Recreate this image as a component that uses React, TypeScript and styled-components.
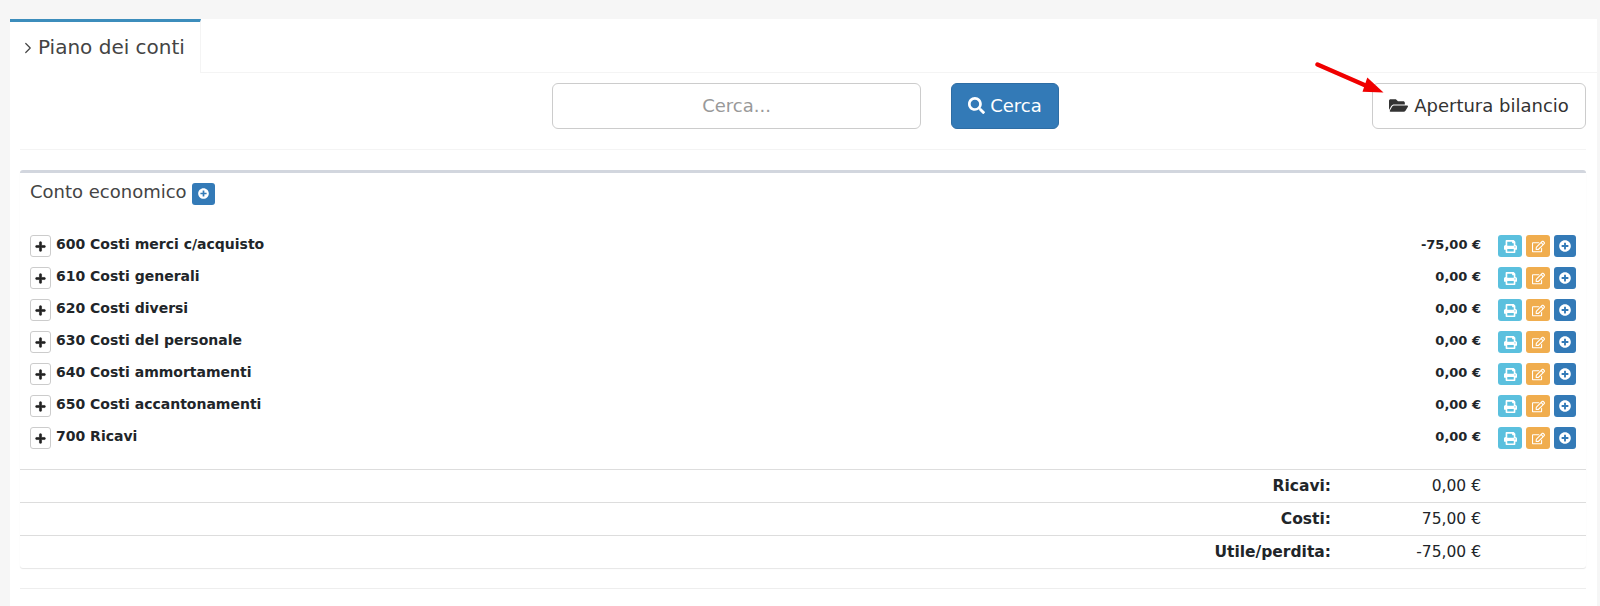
import styled, { createGlobalStyle } from "styled-components";
import {
  FaFolderOpen,
  FaPlus,
  FaPlusCircle,
  FaPrint,
  FaRegEdit,
  FaSearch,
} from "react-icons/fa";
import { ChevronRight } from "lucide-react";

const accounts = [
  { code: "600 Costi merci c/acquisto", amount: "-75,00 €" },
  { code: "610 Costi generali", amount: "0,00 €" },
  { code: "620 Costi diversi", amount: "0,00 €" },
  { code: "630 Costi del personale", amount: "0,00 €" },
  { code: "640 Costi ammortamenti", amount: "0,00 €" },
  { code: "650 Costi accantonamenti", amount: "0,00 €" },
  { code: "700 Ricavi", amount: "0,00 €" },
];

const totals = [
  { label: "Ricavi:", value: "0,00 €" },
  { label: "Costi:", value: "75,00 €" },
  { label: "Utile/perdita:", value: "-75,00 €" },
];

const App = () => {
  return (
    <>
      <GlobalStyle />
      <Page>
        <TabBar>
          <Tab>
            <ChevronRight strokeWidth={1.6} />
            Piano dei conti
          </Tab>
        </TabBar>
        <Content>
          <SearchRow>
            <SearchInput placeholder="Cerca..." />
            <SearchButton>
              <FaSearch />
              Cerca
            </SearchButton>
            <OpenButton>
              <FaFolderOpen />
              Apertura bilancio
            </OpenButton>
            {/* red arrow drawn on top of the screenshot */}
            <Arrow width="80" height="44" viewBox="0 0 80 44">
              <path d="M2.5 2.5 L54 25" stroke="#f00000" strokeWidth="4.4" strokeLinecap="round" />
              <path d="M68.5 30.5 L47.5 29.7 L52.3 15.5 Z" fill="#f00000" />
            </Arrow>
          </SearchRow>
          <Box>
            <BoxTitle>
              <span>Conto economico</span>
              <TitleButton>
                <FaPlusCircle />
              </TitleButton>
            </BoxTitle>
            <AccountList>
              {accounts.map((account) => (
                <AccountRow key={account.code}>
                  <ExpandButton>
                    <FaPlus />
                  </ExpandButton>
                  <AccountName>{account.code}</AccountName>
                  <AccountAmount>{account.amount}</AccountAmount>
                  <Actions>
                    <ActionButton $color="#5bc0de" $width={24} $icon={13}>
                      <FaPrint />
                    </ActionButton>
                    <ActionButton $color="#f0ad4e" $width={24} $icon={13}>
                      <FaRegEdit />
                    </ActionButton>
                    <ActionButton $color="#337ab7" $width={22} $icon={12}>
                      <FaPlusCircle />
                    </ActionButton>
                  </Actions>
                </AccountRow>
              ))}
            </AccountList>
            {totals.map((total) => (
              <TotalRow key={total.label}>
                <TotalLabel>{total.label}</TotalLabel>
                <TotalValue>{total.value}</TotalValue>
              </TotalRow>
            ))}
          </Box>
          <BottomRule />
        </Content>
      </Page>
    </>
  );
};

export default App;

const GlobalStyle = createGlobalStyle`
  html, body {
    margin: 0;
    height: 606px;
    overflow: hidden;
    background: #f6f6f6;
    font-family: "DejaVu Sans", sans-serif;
    color: #212529;
  }
`;

const Page = styled.div`
  margin: 19px 3px 0 10px;
  height: 587px;
  background: #fff;
`;

// tabs
const TabBar = styled.div`
  height: 53px;
  border-bottom: 1px solid #f4f4f4;
  box-sizing: content-box;
`;

const Tab = styled.div`
  width: 191px;
  height: 54px;
  box-sizing: border-box;
  border-top: 3px solid #3c8dbc;
  border-right: 1px solid #f4f4f4;
  background: #fff;
  display: flex;
  align-items: center;
  padding: 0 0 1px 9px;
  font-size: 20px;
  color: #444;
  svg {
    width: 18px;
    height: 18px;
    margin-right: 1px;
    margin-top: 2px;
  }
`;

const Content = styled.div`
  margin: 0 11px 0 10px;
`;

// search row
const SearchRow = styled.div`
  position: relative;
  display: flex;
  align-items: flex-start;
  height: 77px;
  padding-top: 10px;
  box-sizing: border-box;
  border-bottom: 1px solid #f4f4f4;
`;

const SearchInput = styled.input`
  width: 369px;
  height: 46px;
  margin-left: 532px;
  padding: 0 12px 2px;
  box-sizing: border-box;
  border: 1px solid #ccc;
  border-radius: 6px;
  text-align: center;
  font: 18px "DejaVu Sans", sans-serif;
  &::placeholder {
    color: #999;
    opacity: 1;
  }
`;

const SearchButton = styled.button`
  width: 108px;
  height: 46px;
  margin-left: 30px;
  border: 1px solid #2e6da4;
  border-radius: 6px;
  background: #337ab7;
  color: #fff;
  font: 18px "DejaVu Sans", sans-serif;
  display: flex;
  align-items: center;
  justify-content: center;
  padding: 0 0 2px;
  svg {
    width: 17px;
    height: 17px;
    margin-right: 5px;
  }
`;

const OpenButton = styled.button`
  width: 214px;
  height: 46px;
  margin-left: auto;
  border: 1px solid #ccc;
  border-radius: 6px;
  background: #fff;
  color: #333;
  font: 18px "DejaVu Sans", sans-serif;
  display: flex;
  align-items: center;
  justify-content: center;
  padding: 0 0 2px;
  svg {
    width: 19px;
    height: 17px;
    margin-right: 6px;
  }
`;

const Arrow = styled.svg`
  position: absolute;
  left: 1295px;
  top: -11px;
`;

// box
const Box = styled.div`
  margin-top: 20px;
  border-top: 3px solid #d2d6de;
  border-radius: 3px;
  box-shadow: 0 1px 1px rgba(0, 0, 0, 0.1);
  background: #fff;
`;

const BoxTitle = styled.div`
  display: flex;
  align-items: center;
  height: 38px;
  padding-left: 10px;
  font-size: 18px;
  color: #444;
  span:first-child {
    margin-top: -2px;
  }
`;

const TitleButton = styled.span`
  width: 23px;
  height: 22px;
  margin-left: 5px;
  margin-top: 3px;
  border-radius: 3px;
  background: #337ab7;
  color: #fff;
  display: flex;
  align-items: center;
  justify-content: center;
  svg {
    width: 11px;
    height: 11px;
  }
`;

const AccountList = styled.div`
  padding: 24px 10px 10px;
`;

const AccountRow = styled.div`
  display: flex;
  align-items: flex-start;
  height: 32px;
`;

const ExpandButton = styled.span`
  width: 21px;
  height: 22px;
  box-sizing: border-box;
  border: 1px solid #ccc;
  border-radius: 3px;
  background: #fff;
  color: #222;
  display: flex;
  align-items: center;
  justify-content: center;
  svg {
    width: 11px;
    height: 11px;
    stroke: currentColor;
    stroke-width: 30px;
  }
`;

const AccountName = styled.span`
  margin-left: 5px;
  font-size: 14px;
  font-weight: bold;
  line-height: 19px;
  flex: 1;
`;

const AccountAmount = styled.span`
  font-size: 13px;
  font-weight: bold;
  line-height: 20px;
`;

const Actions = styled.div`
  display: flex;
  gap: 4px;
  margin-left: 17px;
`;

const ActionButton = styled.span<{
  $color: string;
  $width: number;
  $icon: number;
}>`
  width: ${(props) => props.$width}px;
  height: 22px;
  border-radius: 3px;
  background: ${(props) => props.$color};
  color: #fff;
  display: flex;
  align-items: center;
  justify-content: center;
  svg {
    width: ${(props) => props.$icon}px;
    height: ${(props) => props.$icon}px;
  }
`;

// totals
const TotalRow = styled.div`
  display: flex;
  height: 33px;
  box-sizing: border-box;
  align-items: center;
  border-top: 1px solid #ddd;
  font-size: 15.5px;
`;

const TotalLabel = styled.span`
  width: 1311px;
  text-align: right;
  font-weight: bold;
`;

const TotalValue = styled.span`
  width: 150px;
  text-align: right;
`;

const BottomRule = styled.div`
  margin-top: 20px;
  border-top: 1px solid #eee;
`;
